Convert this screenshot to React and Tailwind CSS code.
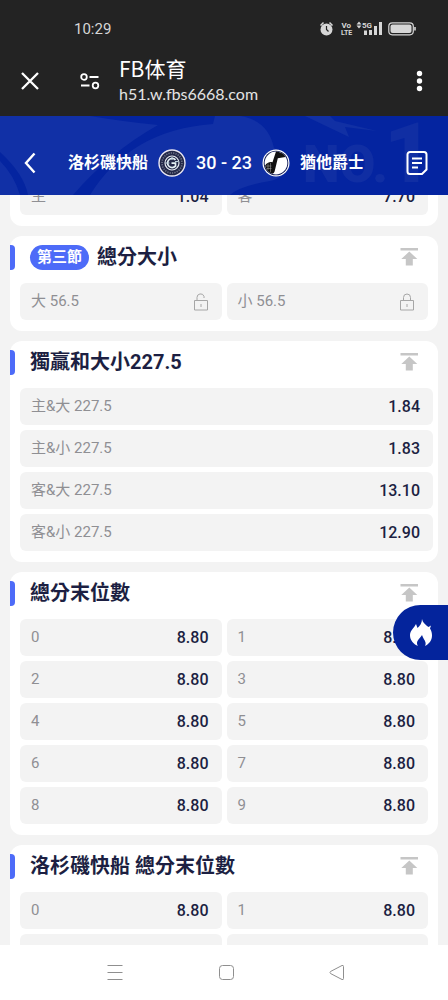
import React from "react";

const digits = ["0", "1", "2", "3", "4", "5", "6", "7", "8", "9"].map((label) => ({ label, odds: "8.80" }));

function StatusBar() {
  return (
    <div className="flex h-[46px] items-end justify-between pr-8 pl-[74px] pb-2 text-[#d6d6d6]">
      <span className="text-[15px] leading-[18px]">10:29</span>
      <svg className="h-[18px] w-24" viewBox="0 0 96 18" fill="none" aria-hidden="true">
        <g transform="translate(-320 -20)">
          <circle cx="326.500" cy="29.500" r="6" fill="currentColor" />
          <path d="M320.500 25.500l3-3M332.500 25.500l-3-3" stroke="currentColor" strokeWidth="1.500" />
          <path d="M326.500 26v3.500l2 2" stroke="#232323" strokeWidth="1.200" />
          <text x="341.500" y="28" fontSize="8" fontWeight="700" fill="currentColor">Vo</text>
          <text x="341" y="35" fontSize="7" fontWeight="700" fill="currentColor">LTE</text>
          <path d="M356.500 24.500l2.500-3 2.500 3zM356.500 25.500l2.500 3 2.500-3z" fill="currentColor" />
          <text x="362" y="28" fontSize="8" fontWeight="700" fill="currentColor">5G</text>
          <path d="M364 30.500h3v4.500h-3zM369 30h3v5h-3zM374 26h3v9h-3zM379 22h3v13h-3z" fill="currentColor" />
          <rect x="388.800" y="22.800" width="24.500" height="12" rx="3.500" stroke="currentColor" strokeWidth="1.200" />
          <rect x="390.500" y="24.500" width="21" height="8.600" rx="2" fill="currentColor" />
          <path d="M415 27v3.500" stroke="currentColor" strokeWidth="1.600" />
        </g>
      </svg>
    </div>
  );
}

function BrowserBar() {
  return (
    <div className="flex h-[70px] items-center pr-4 pl-[18px] text-white">
      <button type="button" aria-label="Close" className="size-6">
        <svg viewBox="0 0 24 24" className="size-6" fill="none" stroke="currentColor" strokeWidth="2.300">
          <path d="M4 4l16 16M20 4L4 20" />
        </svg>
      </button>
      <button type="button" aria-label="Site settings" className="ml-9 size-6">
        <svg viewBox="0 0 24 24" className="size-6" fill="none" stroke="currentColor" strokeWidth="1.800">
          <circle cx="6" cy="8" r="2.800" />
          <path d="M11.500 8h9M3 16.500h8.500" />
          <circle cx="17.500" cy="16.500" r="2.800" />
        </svg>
      </button>
      <div className="ml-[17px] flex-1">
        <div className="font-['Noto_Sans_CJK_SC',sans-serif] text-[21px] leading-[26px]">FB体育</div>
        <div className="font-['Lato',sans-serif] text-base leading-[26px] text-[#e4e4e4]">h51.w.fbs6668.com</div>
      </div>
      <button type="button" aria-label="More" className="size-6">
        <svg viewBox="0 0 24 24" className="size-6" fill="currentColor">
          <circle cx="11.500" cy="4.500" r="2.700" />
          <circle cx="11.500" cy="12" r="2.700" />
          <circle cx="11.500" cy="19.500" r="2.700" />
        </svg>
      </button>
    </div>
  );
}

function ClippersLogo() {
  return (
    <svg viewBox="0 0 28 28" className="size-7 shrink-0" fill="none" aria-hidden="true">
      <circle cx="14" cy="14" r="13" fill="#232848" stroke="#e9e6f2" strokeWidth="1.400" />
      <circle cx="14" cy="14" r="10" stroke="#70768c" strokeWidth="1.600" strokeDasharray="1.200 1.200" />
      <circle cx="14" cy="14" r="7" stroke="#e4e9f0" strokeWidth="1.200" />
      <path d="M17.500 10.800a4.600 4.600 0 1 0 0 6.400v-3h-4" stroke="#e4f0f4" strokeWidth="1.700" />
      <path d="M7.500 14h4M14 8v3M17 12.500h3.500" stroke="#b9cfdb" strokeWidth="1" />
    </svg>
  );
}

function JazzLogo() {
  return (
    <svg viewBox="0 0 28 28" className="size-7 shrink-0" aria-hidden="true">
      <circle cx="14" cy="14" r="13.500" fill="#fff" />
      <circle cx="14" cy="14" r="12.300" fill="#0a1550" />
      <circle cx="14" cy="14" r="11.400" fill="#fff" />
      <path d="M14 2.600A11.400 11.400 0 0 1 23.500 8L15.800 9.200 12.600 22.500q-.6 2-2.200 2.300A11.400 11.400 0 0 1 3 16.800q2.500-4.300 7.500-3.600z" fill="#111" />
      <path d="M3.500 17h6M4.500 19.500h5M6 14.500v6.500M8.500 14v9" stroke="#999" strokeWidth=".6" />
    </svg>
  );
}

function MatchHeader() {
  return (
    <header className="relative flex h-[79px] items-center overflow-hidden bg-[#0424a0] px-[18px] pt-[14px] text-white">
      <svg className="absolute inset-0 h-full w-full" viewBox="0 0 448 79" preserveAspectRatio="xMidYMid slice" aria-hidden="true">
        <path d="M0 0h90q36 6 68 9Q110 36 73 79H28Q24 58 0 36z" fill="#1130a6" />
        <path d="M0 45q14 14 20 34H0z" fill="#1130a6" />
        <path d="M213 8Q130 14 90 79h140q10-9 40-14 18-4 17-18-2-10-13-15Q268 4 240 0h-25z" fill="#1130a6" />
        <path d="M305 0h25l5 5 42 10-32-4 4 10z" fill="#1130a4" />
        <g fontWeight="900" fill="#102ea3">
          <text x="303" y="66" fontSize="52">NO.</text>
          <text x="384" y="66" fontSize="84">1</text>
        </g>
      </svg>
      <button type="button" aria-label="Back" className="relative size-6">
        <svg viewBox="0 0 24 24" className="size-6" fill="none" stroke="currentColor" strokeWidth="2.400">
          <path d="M16.500 2.500L8 12l8.500 9.500" />
        </svg>
      </button>
      <div className="relative flex flex-1 items-center justify-center gap-[10px] pr-4 text-base font-bold whitespace-nowrap">
        <span>洛杉磯快船</span>
        <ClippersLogo />
        <span className="text-lg font-medium">30 - 23</span>
        <JazzLogo />
        <span>猶他爵士</span>
      </div>
      <button type="button" aria-label="Bet slip" className="relative size-6">
        <svg viewBox="0 0 24 24" className="size-6" fill="none" stroke="currentColor" strokeWidth="2">
          <path d="M4 1h14a2.500 2.500 0 0 1 2.500 2.500V18.500L16 23H4a2.500 2.500 0 0 1-2.500-2.500v-17A2.500 2.500 0 0 1 4 1z" />
          <path d="M6 7.500h10M6 12h10M6 16.500h6" />
        </svg>
      </button>
    </header>
  );
}

function Lock({ open }) {
  return (
    <svg viewBox="0 0 16 20" className="h-5 w-4" fill="none" stroke="#a6a6a6" aria-hidden="true">
      <path d="M1.500 8.500h13v9.500h-13z" />
      <path d={open ? "M4 8.500V5.500a3.600 3.600 0 0 1 7-1.200v1.700" : "M4.500 8.500V5.500a3.500 3.500 0 0 1 7 0v3"} />
      <path d="M8 12v3" />
    </svg>
  );
}

function Cell({ label, odds, lock }) {
  return (
    <button type="button" className="flex h-[37px] items-center justify-between rounded-md bg-[#f3f3f3] pr-[13px] pl-[11px]">
      <span className="text-[15px] font-normal text-[#8f8f93]">{label}</span>
      {lock ? <Lock open={lock === "open"} /> : <span className="text-base font-medium text-[#1c1f42]">{odds}</span>}
    </button>
  );
}

function Market({ title, tag, items, single }) {
  return (
    <section className="rounded-xl bg-white pb-[11px]">
      <div className="flex h-[47px] items-start justify-between pt-[9px] pr-[19px]">
        <div className="flex items-center">
          <span className="h-[25px] w-[5px] rounded-r-[4px] bg-[#4d6bf8]" />
          <h2 className="ml-[15px] flex items-center gap-2 text-xl leading-[25px] font-bold text-[#1c1f42]">
            {tag && (
              <span className="rounded-full bg-[#4d6bf8] px-[7px] text-[15px] leading-[25px] text-white">{tag}</span>
            )}
            {title}
          </h2>
        </div>
        <button type="button" aria-label={`Pin ${title}`} className="mt-[2px] h-5 w-5">
          <svg viewBox="0 0 20 20" className="size-5" fill="#c6c6c6">
            <path d="M1.500 1h17.500v2.500H1.500zM10.300 4.500l8 7.500h-4.500v6.500h-7V12H2.300z" />
          </svg>
        </button>
      </div>
      <div className={single ? "grid gap-[5px] pr-[5px] pl-[10px]" : "grid grid-cols-2 gap-[5px] px-[10px]"}>
        {items.map((item) => (
          <Cell key={item.label} {...item} />
        ))}
      </div>
    </section>
  );
}

function NavBar() {
  return (
    <nav className="flex h-[55px] shrink-0 items-center justify-center gap-[87px] bg-white pl-1">
      <button type="button" aria-label="Recent" className="size-6">
        <svg viewBox="0 0 24 24" className="size-6" fill="none" stroke="#8f8f8f">
          <path d="M4.500 4.500h15M4.500 11.500h15M4.500 18.500h15" />
        </svg>
      </button>
      <button type="button" aria-label="Home" className="size-6">
        <svg viewBox="0 0 24 24" className="size-6" fill="none" stroke="#8f8f8f">
          <rect x="5.500" y="4.500" width="14" height="14" rx="3" />
        </svg>
      </button>
      <button type="button" aria-label="Back" className="size-6">
        <svg viewBox="0 0 24 24" className="size-6" fill="none" stroke="#8f8f8f" strokeLinejoin="round">
          <path d="M5.500 10.500L17 4.500q1.500-.5 1.500 1v12q0 1.500-1.500 1L5.500 12.500q-1-1 0-2z" />
        </svg>
      </button>
    </nav>
  );
}

export default function App() {
  return (
    <div className="relative flex h-screen flex-col overflow-hidden bg-[#f3f3f3] font-['Roboto','Noto_Sans_CJK_TC',sans-serif]">
      <div className="shrink-0 bg-[#232323]">
        <StatusBar />
        <BrowserBar />
      </div>
      <div className="shrink-0">
        <MatchHeader />
      </div>
      <main className="min-h-0 flex-1 overflow-hidden px-[10px]">
        <div className="-mt-[17px] flex flex-col gap-[10px]">
          <section className="rounded-b-xl bg-white pb-[11px]">
            <div className="grid grid-cols-2 gap-[5px] px-[10px]">
              <Cell label="主" odds="1.04" />
              <Cell label="客" odds="7.70" />
            </div>
          </section>
          <Market
            tag="第三節"
            title="總分大小"
            items={[
              { label: "大 56.5", lock: "open" },
              { label: "小 56.5", lock: "closed" },
            ]}
          />
          <Market
            single
            title="獨贏和大小227.5"
            items={[
              { label: "主&大 227.5", odds: "1.84" },
              { label: "主&小 227.5", odds: "1.83" },
              { label: "客&大 227.5", odds: "13.10" },
              { label: "客&小 227.5", odds: "12.90" },
            ]}
          />
          <Market title="總分末位數" items={digits} />
          <Market title="洛杉磯快船 總分末位數" items={digits} />
        </div>
      </main>
      <NavBar />
      <button
        type="button"
        aria-label="Hot"
        className="absolute top-[605px] right-0 flex h-[55px] w-[55px] items-center justify-center rounded-l-full bg-[#04249c]"
      >
        <svg viewBox="0 0 24 30" className="h-[30px] w-6" fill="#fff" aria-hidden="true">
          <path d="M13 1c.5 3.500 3 5 5 7l1.500 1 2.500-1.500-1 3c1.500 2.500 2 4.500 2 7 0 5-3 8.500-7 10.500.5-1 .8-2 .5-3.500-.4-2.500-2.500-4-3.500-7.500-1.500 3-5 5-5 8 0 1.500.5 2.200 1 3-4-1.500-8-5.500-8-10.500 0-4 2.500-6.500 4.500-9L7 6l1.500 4C11 8 13 5 13 1z" />
        </svg>
      </button>
    </div>
  );
}
